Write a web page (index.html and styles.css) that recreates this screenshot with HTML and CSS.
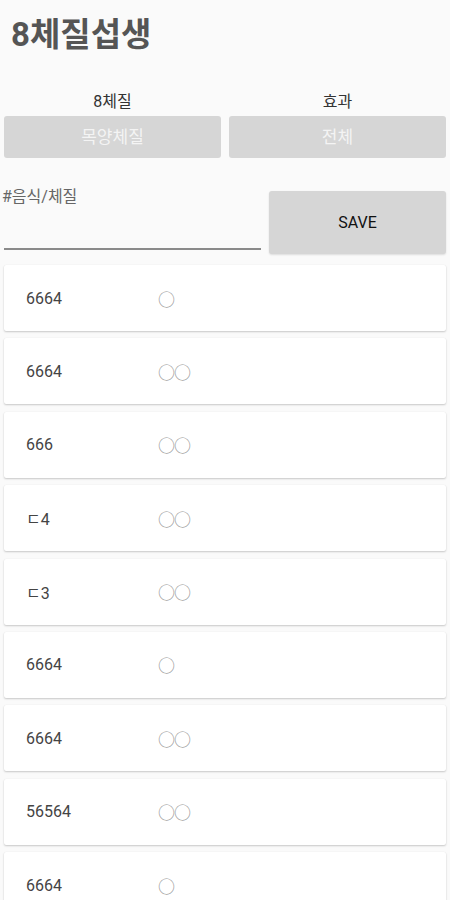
FILE: index.html
```html
<!DOCTYPE html>
<html>
<head>
	<meta charset="utf-8">
	<title>8체질섭생</title>
	<link rel="stylesheet" href="styles.css">
</head>
<body>
	<div class="title">8체질섭생</div>

	<div class="pickers">
		<div class="picker">
			<div class="picker-label">8체질</div>
			<div class="picker-btn">목양체질</div>
		</div>
		<div class="picker">
			<div class="picker-label">효과</div>
			<div class="picker-btn">전체</div>
		</div>
	</div>

	<div class="entry">
		<div class="field">
			<div class="field-hint">#음식/체질</div>
			<div class="field-line"></div>
		</div>
		<div class="save">SAVE</div>
	</div>

	<div class="list">
		<div class="card"><span class="name">6664</span><span class="mark">○</span></div>
		<div class="card"><span class="name">6664</span><span class="mark">○○</span></div>
		<div class="card"><span class="name">666</span><span class="mark">○○</span></div>
		<div class="card"><span class="name">ㄷ4</span><span class="mark">○○</span></div>
		<div class="card"><span class="name">ㄷ3</span><span class="mark">○○</span></div>
		<div class="card"><span class="name">6664</span><span class="mark">○</span></div>
		<div class="card"><span class="name">6664</span><span class="mark">○○</span></div>
		<div class="card"><span class="name">56564</span><span class="mark">○○</span></div>
		<div class="card"><span class="name">6664</span><span class="mark">○</span></div>
	</div>
</body>
</html>
```

FILE: styles.css
```css
body {
	margin: 0;
	background-color: #fafafa;
	font-family: Roboto, "Noto Sans CJK KR", sans-serif;
	color: #444;
	overflow: hidden;
}

.title {
	padding: 13px 0 0 11px;
	height: 73px;
	box-sizing: border-box;
	font-size: 33px;
	font-weight: bold;
	color: #555;
	line-height: 44px;
}

.pickers {
	display: flex;
	gap: 8px;
	padding: 15px 4px 0 4px;
}
.picker {
	flex: 1;
}
.picker-label {
	text-align: center;
	font-size: 16px;
	color: #333;
	line-height: 28px;
	height: 28px;
}
.picker-btn {
	height: 42px;
	line-height: 42px;
	text-align: center;
	background-color: #d6d6d6;
	border-radius: 3px;
	color: #f4f4f4;
	font-size: 17px;
}

.entry {
	display: flex;
	gap: 8px;
	padding: 33px 4px 0 2px;
}
.field {
	flex: 0 0 259px;
	display: flex;
	flex-direction: column;
}
.field-hint {
	font-size: 16px;
	color: #666;
	line-height: 18px;
	margin-top: -3px;
}
.field-line {
	margin: auto 0 4px 2px;
	height: 2px;
	background-color: #8a8a8a;
}
.save {
	flex: 1;
	height: 63px;
	line-height: 63px;
	text-align: center;
	background-color: #d6d6d6;
	border-radius: 3px;
	box-shadow: 0 1px 2px rgba(0, 0, 0, 0.12);
	color: #111;
	font-size: 16px;
}

.list {
	display: flex;
	flex-direction: column;
	gap: 7.4px;
	padding: 11px 4px 0 4px;
}
.card {
	display: flex;
	align-items: center;
	height: 66px;
	flex-shrink: 0;
	background-color: #fff;
	border-radius: 2px;
	box-shadow: 0 1px 2px rgba(0, 0, 0, 0.2), 0 0 1px rgba(0, 0, 0, 0.08);
}
.name {
	width: 132px;
	padding-left: 22px;
	font-size: 16px;
	color: #444;
}
.mark {
	font-family: "Noto Sans CJK KR", sans-serif;
	font-size: 17px;
	color: #999;
	letter-spacing: -1px;
}
```
